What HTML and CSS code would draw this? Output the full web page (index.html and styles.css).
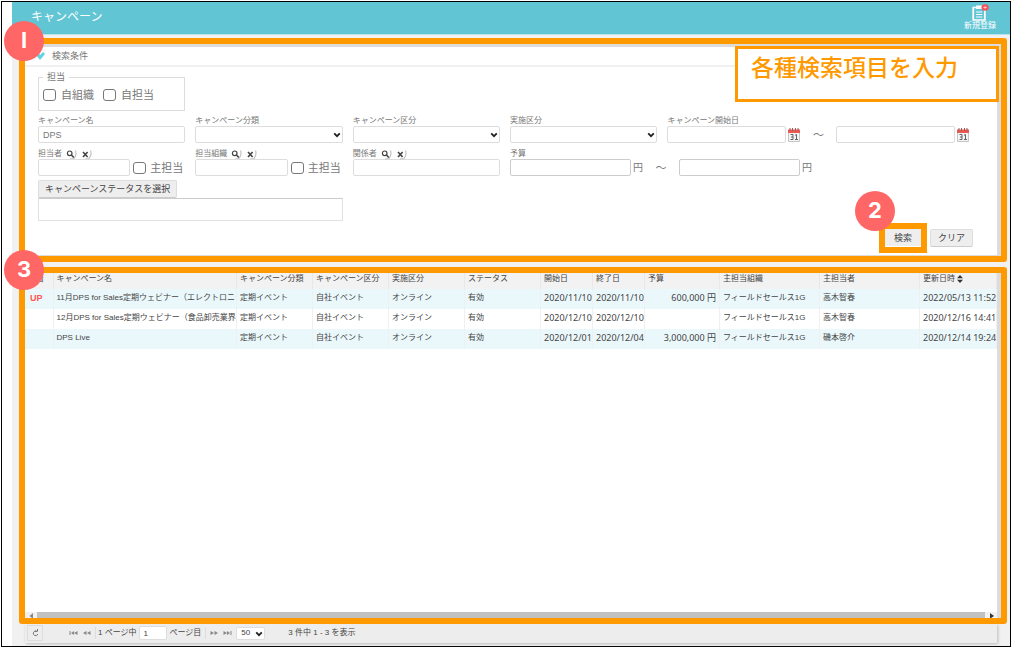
FILE: index.html
```html
<!DOCTYPE html>
<html lang="ja">
<head>
<meta charset="utf-8">
<title>キャンペーン</title>
<link rel="stylesheet" href="styles.css">
</head>
<body>
<svg class="defs" aria-hidden="true">
  <symbol id="chevron" viewBox="0 0 8 6"><path d="M1.2 1.3 4 4.2 6.8 1.3" fill="none" stroke="#222" stroke-width="1.8"/></symbol>
  <symbol id="search" viewBox="0 0 11 11"><path d="M9.5 1.5Q11 6 8 9.5L4 10.2" fill="none" stroke="#c4c4c4" stroke-width="1.2"/><circle cx="3.7" cy="4.3" r="2.3" fill="none" stroke="#444" stroke-width="1.2"/><path d="m5.4 6 2.4 2.5" stroke="#444" stroke-width="1.6"/></symbol>
  <symbol id="clear" viewBox="0 0 11 11"><path d="M9.5 1.5Q11 6 8 9.5L4 10.2" fill="none" stroke="#c4c4c4" stroke-width="1.2"/><path d="m2 3 4.6 5M6.6 3 2 8" stroke="#444" stroke-width="1.6"/></symbol>
  <symbol id="calendar" viewBox="0 0 12 14"><path d="M.5 4.500V13.500H11.500V4.500" fill="#f4f4f4" stroke="#c5c5c5"/><path d="M0 1.500H12V5H0z" fill="#ea5a50"/><path d="M2 0V3M4.500 0V3M7.500 0V3M10 0V3" stroke="#9c5a58"/><path d="M2.500 6.500H5V11.500H2.500M3 9H5M7 7.300 8.500 6.500V11.500M7 11.500H10" fill="none" stroke="#666" stroke-width="1"/></symbol>
</svg>
<div class="window">
  <header class="topbar">
    <h1>キャンペーン</h1>
    <button class="new" type="button">
      <svg width="18" height="17" viewBox="0 0 16 17" preserveAspectRatio="none"><path d="M2 3.500H12.300V16H2z" fill="none" stroke="#fff" stroke-width="1.600"/><path d="M4.500 1.500H10V5H4.500z" fill="#fff"/><path d="M4.500 8H10M4.500 10.500H10M4.500 13H10" stroke="#fff"/><circle cx="12.500" cy="3.500" r="3.200" fill="#f2545b"/><path d="M11 3.500H14M12.500 2V5" stroke="#ffc9cb" stroke-width=".8"/></svg>
      <span>新規登録</span>
    </button>
  </header>

  <section class="frame search">
    <span class="badge corner">I</span>
    <p class="callout">各種検索項目を入力</p>
    <form class="panel">
      <h2><svg width="9" height="8" viewBox="0 0 9 8"><path d="M0 3 3 1 4 3 7 0 9 2 4 8z" fill="#62d4df"/></svg>検索条件</h2>
      <div class="form">
        <fieldset>
          <legend>担当</legend>
          <label class="check"><input type="checkbox">自組織</label>
          <label class="check"><input type="checkbox">自担当</label>
        </fieldset>
        <div class="grid">
          <div><div class="label"><label for="name">キャンペーン名</label></div><input class="box" id="name" type="text" value="DPS"></div>
          <div><div class="label"><label for="cat">キャンペーン分類</label></div><div class="select"><select class="box" id="cat"><option></option></select><svg><use href="#chevron"/></svg></div></div>
          <div><div class="label"><label for="kind">キャンペーン区分</label></div><div class="select"><select class="box" id="kind"><option></option></select><svg><use href="#chevron"/></svg></div></div>
          <div><div class="label"><label for="mode">実施区分</label></div><div class="select"><select class="box" id="mode"><option></option></select><svg><use href="#chevron"/></svg></div></div>
          <div><div class="label"><label for="from">キャンペーン開始日</label></div>
            <div class="range"><input class="box" id="from" type="text"><svg class="cal"><use href="#calendar"/></svg><span class="tilde">～</span><input class="box" type="text" aria-label="終了"><svg class="cal"><use href="#calendar"/></svg></div></div>

          <div><div class="label"><label for="person">担当者</label><svg><use href="#search"/></svg><svg><use href="#clear"/></svg></div>
            <div class="range"><input class="box" id="person" type="text"><label class="check main"><input type="checkbox">主担当</label></div></div>
          <div><div class="label"><label for="org">担当組織</label><svg><use href="#search"/></svg><svg><use href="#clear"/></svg></div>
            <div class="range"><input class="box" id="org" type="text"><label class="check main"><input type="checkbox">主担当</label></div></div>
          <div><div class="label"><label for="rel">関係者</label><svg><use href="#search"/></svg><svg><use href="#clear"/></svg></div><input class="box" id="rel" type="text"></div>
          <div class="budget"><div class="label"><label for="budget">予算</label></div>
            <div class="range"><input class="box" id="budget" type="text"><span class="yen">円</span><span class="tilde">～</span><input class="box" type="text" aria-label="予算上限"><span class="yen">円</span></div></div>
        </div>
        <button class="btn status" type="button">キャンペーンステータスを選択</button>
        <div class="chosen"></div>
        <div class="actions">
          <div class="mark"><span class="badge">2</span><button class="btn" type="submit">検索</button></div>
          <button class="btn reset" type="reset">クリア</button>
        </div>
      </div>
    </form>
  </section>

  <section class="frame results">
    <span class="badge corner">3</span>
    <div class="list">
      <table>
        <colgroup><col class="w28"><col><col class="w76"><col class="w76"><col class="w76"><col class="w76"><col class="w52"><col class="w52"><col class="w75"><col class="w100"><col class="w100"><col class="w77"></colgroup>
        <thead><tr><th>新着</th><th>キャンペーン名</th><th>キャンペーン分類</th><th>キャンペーン区分</th><th>実施区分</th><th>ステータス</th><th>開始日</th><th>終了日</th><th>予算</th><th>主担当組織</th><th>主担当者</th><th>更新日時<svg class="sort" viewBox="0 0 6 8"><path d="M0 3.300 3 0 6 3.300zM0 4.700H6L3 8z" fill="#333"/></svg></th></tr></thead>
        <tbody>
          <tr><td class="up">UP</td><td>11月DPS for Sales定期ウェビナー（エレクトロニクス）</td><td>定期イベント</td><td>自社イベント</td><td>オンライン</td><td>有効</td><td class="num">2020/11/10</td><td class="num">2020/11/10</td><td class="num right">600,000 円</td><td>フィールドセールス1G</td><td>高木智春</td><td class="num">2022/05/13 11:52</td></tr>
          <tr><td></td><td>12月DPS for Sales定期ウェビナー（食品卸売業界）</td><td>定期イベント</td><td>自社イベント</td><td>オンライン</td><td>有効</td><td class="num">2020/12/10</td><td class="num">2020/12/10</td><td></td><td>フィールドセールス1G</td><td>高木智春</td><td class="num">2020/12/16 14:41</td></tr>
          <tr><td></td><td>DPS Live</td><td>定期イベント</td><td>自社イベント</td><td>オンライン</td><td>有効</td><td class="num">2020/12/01</td><td class="num">2020/12/04</td><td class="num right">3,000,000 円</td><td>フィールドセールス1G</td><td>磯本啓介</td><td class="num">2020/12/14 19:24</td></tr>
        </tbody>
      </table>
      <div class="scroll"><svg viewBox="0 0 12 6"><path d="M8 1V6H7L4.500 4z" fill="#888"/></svg><div class="thumb"></div><svg viewBox="0 0 12 6"><path d="M5 1V6H6L9 4z" fill="#333"/></svg></div>
    </div>
  </section>

  <footer class="pager">
    <button class="reload" type="button" aria-label="更新"><svg width="7" height="8" viewBox="0 0 7 8"><path d="M5 2.500A2.300 2.300 0 1 0 5.800 5M3 2.300H5.500V0" fill="none" stroke="#777"/></svg></button>
    <button class="nav" type="button" aria-label="最初"><svg viewBox="0 0 9 6"><path d="M1 1V5" stroke="#888"/><path d="M5 1V5L2 3zM8.500 1V5L5 3z" fill="#888"/></svg></button>
    <button class="nav" type="button" aria-label="前"><svg viewBox="0 0 9 6"><path d="M4.500 1V5L1 3zM8.500 1V5L5 3z" fill="#888"/></svg></button>
    <i class="sep"></i>
    <label for="page">1 ページ中</label><input id="page" type="text" value="1"><span>ページ目</span>
    <i class="sep wide"></i>
    <button class="nav" type="button" aria-label="次"><svg viewBox="0 0 9 6"><path d="M.5 1V5L4 3zM4.500 1V5L8 3z" fill="#888"/></svg></button>
    <button class="nav" type="button" aria-label="最後"><svg viewBox="0 0 9 6"><path d="M.5 1V5L4 3zM4 1V5L7 3z" fill="#888"/><path d="M8 1V5" stroke="#888"/></svg></button>
    <div class="select size"><select aria-label="件数"><option>50</option></select><svg><use href="#chevron"/></svg></div>
    <span class="total">3 件中 1 - 3 を表示</span>
  </footer>
</div>
</body>
</html>
```
FILE: styles.css
```css
* { box-sizing: border-box; }
body { margin: 0; background: #fff; color: #444; font: 8px/10px "Liberation Sans", "Noto Sans CJK JP", sans-serif; }
h1, h2, p { margin: 0; font-weight: 400; }
svg { display: block; flex: none; }
button, input, select { margin: 0; padding: 0; font: inherit; color: inherit; }
button { border: 0; background: none; }
.defs { position: absolute; width: 0; height: 0; }

.window { display: flex; flex-direction: column; min-height: calc(100vh - 1px); margin: 1px 0 0 1px; padding-bottom: 3px; border: 1px solid #000; background: linear-gradient(90deg, #fff 10px, #f1f1f1 10px); }

.topbar { display: flex; justify-content: space-between; align-items: center; height: 33px; margin-left: 10px; padding: 0 14px 2px 19px; background: #61c5d4; border-bottom: 1px solid #b9e3ea; color: #fff; }
.topbar h1 { font-size: 12px; line-height: 16px; }
.new { display: flex; flex-direction: column; align-items: center; }

.frame { position: relative; margin: 3px 3px 0 17px; border: 6px solid #f90; border-radius: 3px; background: #dcdcdc; padding-right: 4px; }
.search { padding-top: 3px; padding-bottom: 1px; }
.badge { position: absolute; z-index: 3; display: flex; align-items: center; justify-content: center; width: 40px; height: 40px; padding-bottom: 3px; border-radius: 50%; background: #f66; color: #fff; font: 700 22px/26px Inter, sans-serif; }
.corner { top: -23px; left: -21px; }
.callout { position: absolute; z-index: 2; top: 2px; right: 2px; width: 264px; height: 56px; padding: 3px 13px; border: 3px solid #f90; background: #fff; color: #f90; font: 500 23px/28px "Noto Sans CJK JP", sans-serif; }

.panel { background: #fff; }
.panel h2 { display: flex; align-items: center; gap: 7px; height: 20px; padding-left: 11px; border-bottom: 2px solid #f0f0f0; font-size: 9px; line-height: 12px; color: #777; }
.form { padding: 5px 0 8px 13px; color: #777; }
fieldset { display: flex; align-items: center; gap: 9px; width: 147px; height: 39px; margin: 0; padding: 0 4px 3px; border: 1px solid #ddd; }
legend { padding: 0 4px; font-size: 9px; line-height: 10px; }
.check { display: flex; align-items: center; gap: 5px; font-size: 11px; line-height: 14px; white-space: nowrap; }
.check input { appearance: none; width: 13px; height: 12px; border: 1px solid #777; border-radius: 3px; background: #fff; }
.main { margin: 0 2px 0 3px; gap: 4px; }

.grid { display: grid; grid-template-columns: repeat(4, 148fr) 331fr; gap: 6px 10px; margin-top: 5px; }
.budget { grid-column: span 2; }
.label { display: flex; align-items: center; gap: 4px; height: 10px; white-space: nowrap; }
.label svg { width: 11px; height: 11px; }
.box { display: block; width: 100%; height: 17px; padding: 0 4px; border: 1px solid #ddd; border-radius: 2px; background: #fff; font-size: 9px; }
.select { position: relative; }
.select select { appearance: none; }
.select svg { position: absolute; right: 2px; top: 6px; width: 8px; height: 6px; pointer-events: none; }
.range { display: flex; align-items: center; }
.range .box { flex: none; width: 119px; }
.range .box:has(+ .main) { flex: 1; width: 0; }
.budget .range .box { width: 121px; border-color: #ccc; }
.cal { width: 12px; height: 14px; margin-left: 2px; }
.tilde { width: 36px; text-align: center; font-size: 11px; line-height: 14px; }
.yen { width: 12px; text-align: right; font-size: 10px; line-height: 14px; }

.btn { display: block; height: 18px; border: 1px solid #ddd; border-bottom-color: #ccc; border-radius: 2px; background: #eee; color: #444; font-size: 9px; line-height: 14px; }
.status { margin-top: 4px; padding: 0 6px; }
.chosen { width: 305px; height: 23px; border: 1px solid #e2e2e2; border-top-color: #ccc; }
.actions { display: flex; justify-content: flex-end; gap: 9px; margin: 8px 24px 0 0; }
.mark { position: relative; outline: 6px solid #f90; }
.mark .btn { width: 36px; height: 17px; border: 0; border-radius: 0; }
.mark .badge { left: -30px; top: -38px; }
.reset { width: 43px; }

.results { display: flex; flex: 1; margin-top: 5px; }
.list { display: flex; flex: 1; flex-direction: column; min-width: 0; background: #fff; }
table { width: 100%; table-layout: fixed; border-collapse: collapse; color: #444; }
th, td { padding: 0 0 2px 3px; overflow: hidden; white-space: nowrap; text-align: left; font-weight: 400; border-right: 1px solid #f0f0f0; }
th { height: 16px; padding-bottom: 5px; background: #f2f2f2; border-color: #e8e8e8; }
td { height: 20px; }
tbody tr:nth-child(odd) { background: #ebf8fb; }
.w28 { width: 28px; } .w52 { width: 52px; } .w75 { width: 75px; } .w76 { width: 76px; } .w77 { width: 77px; } .w100 { width: 100px; }
.num { font-family: "Noto Sans", "Noto Sans CJK JP", sans-serif; font-size: 9px; }
.right { text-align: right; padding-right: 3px; }
.up { padding-left: 5px; color: #f55; font-weight: 700; font-size: 9px; }
.sort { display: inline-block; width: 6px; height: 8px; margin-left: 2px; vertical-align: -2px; }
.scroll { display: flex; height: 6px; margin-top: auto; background: #f1f1f1; }
.scroll svg { width: 12px; height: 6px; }
.thumb { flex: 1; background: #c1c1c1; }

.pager { display: flex; align-items: center; height: 19px; margin: 0 13px 0 23px; padding-bottom: 1px; background: #ededed; box-shadow: 1px 1px 3px #bbb; white-space: nowrap; }
.reload { display: flex; align-items: center; justify-content: center; width: 16px; height: 16px; margin: 0 26px 0 2px; border: 1px solid #ddd; }
.nav { margin-right: 4px; }
.nav svg { width: 9px; height: 6px; }
.sep { width: 1px; height: 12px; margin-right: 2px; background: #ddd; }
.wide { margin: 0 4px; }
#page { width: 28px; height: 14px; margin: 0 3px 0 2px; padding: 0 4px; border: 1px solid #ddd; border-radius: 2px; background: #fff; }
.size select { display: block; width: 29px; height: 13px; padding-left: 4px; border: 1px solid #ddd; border-radius: 2px; background: #fff; }
.size svg { top: 4px; }
.total { margin-left: 23px; }
```
